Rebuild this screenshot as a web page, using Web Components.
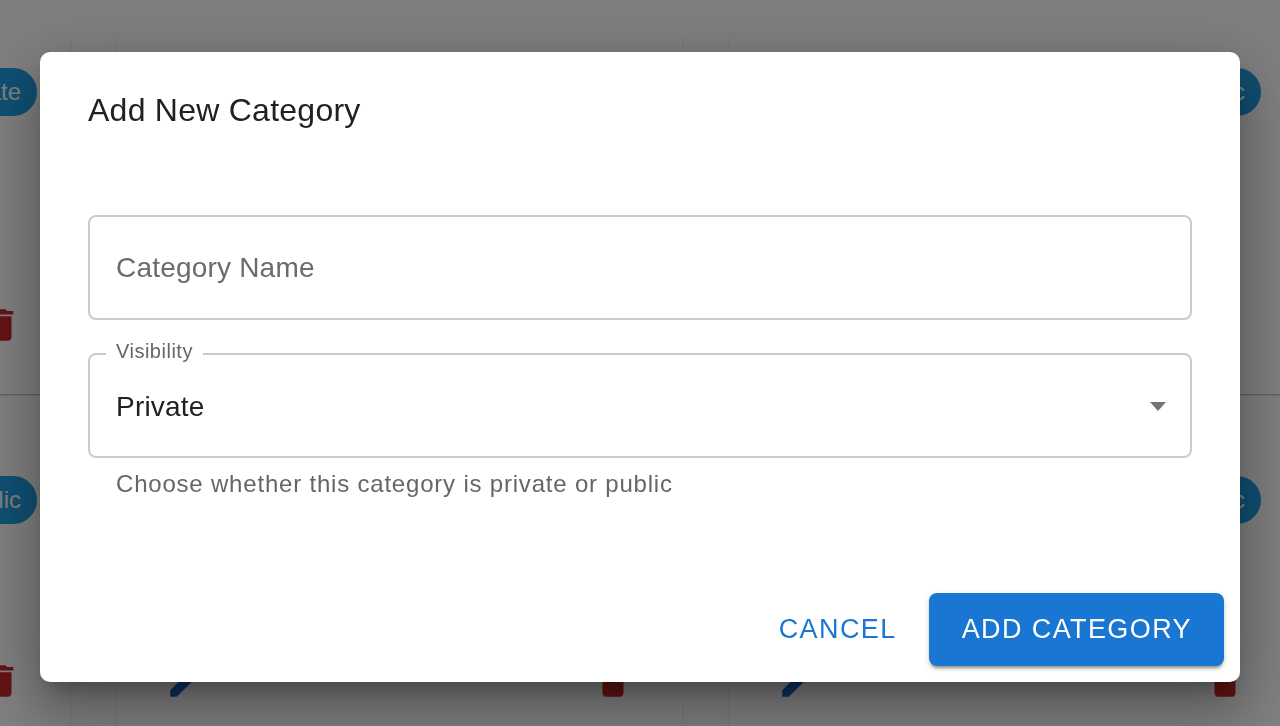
<!DOCTYPE html>
<html lang="en">
<head>
<meta charset="utf-8">
<title>Add New Category</title>
<style>
  html, body { margin: 0; height: 100%; overflow: hidden; background: #fff; font-family: "Liberation Sans", Arial, sans-serif; }
</style>
</head>
<body>
<category-grid>
  <category-card chip="Private"></category-card>
  <category-card></category-card>
  <category-card chip="Public"></category-card>
  <category-card chip="Public"></category-card>
  <category-card></category-card>
  <category-card chip="Public"></category-card>
</category-grid>

<add-dialog heading="Add New Category">
  <outlined-field placeholder="Category Name"></outlined-field>
  <outlined-field label="Visibility" value="Private" helper="Choose whether this category is private or public" select></outlined-field>
  <dialog-button slot="actions" variant="text">Cancel</dialog-button>
  <dialog-button slot="actions" variant="contained">Add Category</dialog-button>
</add-dialog>

<script>
const EDIT_PATH = 'M3 17.25V21h3.75L17.81 9.94l-3.75-3.75L3 17.25zM20.71 7.04c.39-.39.39-1.02 0-1.41l-2.34-2.34c-.39-.39-1.02-.39-1.41 0l-1.83 1.83 3.75 3.75 1.83-1.83z';
const DELETE_PATH = 'M6 19c0 1.1.9 2 2 2h8c1.1 0 2-.9 2-2V7H6v12zM19 4h-3.5l-1-1h-5l-1 1H5v2h14V4z';

class CategoryGrid extends HTMLElement {
  constructor() {
    super();
    this.attachShadow({ mode: 'open' });
    this.shadowRoot.innerHTML = `
      <style>
        :host {
          display: grid;
          grid-template-columns: repeat(3, 565px);
          grid-template-rows: 361px 309px;
          column-gap: 47px;
          row-gap: 47px;
          padding-top: 33px;
          margin-left: -495px;
          width: 1790px;
        }
      </style>
      <slot></slot>
    `;
  }
}

class CategoryCard extends HTMLElement {
  constructor() {
    super();
    this.attachShadow({ mode: 'open' });
    const chip = this.getAttribute('chip');
    this.shadowRoot.innerHTML = `
      <style>
        :host {
          display: flex;
          flex-direction: column;
          background: #fff;
          border-radius: 8px;
          box-shadow: 0 2px 2px -1px rgba(0,0,0,.2), 0 1px 2px 0 rgba(0,0,0,.1), 0 1px 4px 0 rgba(0,0,0,.06);
        }
        .top {
          display: flex;
          justify-content: flex-end;
          padding: 35px 33px 0;
        }
        .chip {
          height: 48px;
          line-height: 48px;
          padding: 0 16px;
          border-radius: 24px;
          background: #1f9fe6;
          color: #fff;
          font-size: 24px;
        }
        .actions {
          margin-top: auto;
          display: flex;
          justify-content: space-between;
          padding: 0 48.5px 48px 48px;
        }
        svg { width: 42px; height: 42px; display: block; }
      </style>
      <div class="top">${chip ? `<span class="chip">${chip}</span>` : ''}</div>
      <div class="actions">
        <svg viewBox="0 0 24 24" fill="#1565c0"><path d="${EDIT_PATH}"/></svg>
        <svg viewBox="0 0 24 24" fill="#c62828"><path d="${DELETE_PATH}"/></svg>
      </div>
    `;
  }
}

class AddDialog extends HTMLElement {
  constructor() {
    super();
    this.attachShadow({ mode: 'open' });
    this.shadowRoot.innerHTML = `
      <style>
        :host {
          position: fixed;
          inset: 0;
          display: flex;
          padding: 52px 40px 44px;
          background: rgba(0,0,0,.5);
          color: #212121;
        }
        .paper {
          flex: 1;
          display: flex;
          flex-direction: column;
          background: #fff;
          border-radius: 10px;
          box-shadow: 0 15px 20px -9px rgba(0,0,0,.26), 0 32px 50px 4px rgba(0,0,0,.18), 0 12px 61px 11px rgba(0,0,0,.16);
        }
        h2 {
          margin: 0;
          padding: 39px 48px 0;
          font-size: 32px;
          line-height: 38px;
          font-weight: 400;
          letter-spacing: .25px;
        }
        .content {
          display: flex;
          flex-direction: column;
          gap: 33px;
          padding: 86px 48px 0;
        }
        .actions {
          margin-top: auto;
          display: flex;
          justify-content: flex-end;
          align-items: center;
          gap: 10px;
          padding: 0 16px 16px;
        }
      </style>
      <div class="paper">
        <h2>${this.getAttribute('heading')}</h2>
        <div class="content"><slot></slot></div>
        <div class="actions"><slot name="actions"></slot></div>
      </div>
    `;
  }
}

class OutlinedField extends HTMLElement {
  constructor() {
    super();
    this.attachShadow({ mode: 'open' });
    const label = this.getAttribute('label');
    const value = this.getAttribute('value');
    const placeholder = this.getAttribute('placeholder');
    const helper = this.getAttribute('helper');
    this.shadowRoot.innerHTML = `
      <style>
        :host { display: block; }
        .box {
          position: relative;
          box-sizing: border-box;
          height: 105px;
          display: flex;
          align-items: center;
          justify-content: space-between;
          padding: 0 24px 0 26px;
          border: 2px solid #cbcbcb;
          border-radius: 8px;
          font-size: 28px;
          letter-spacing: .2px;
        }
        .value { color: #212121; padding-top: 2px; }
        .placeholder { color: #6b6b6b; }
        .label {
          position: absolute;
          left: 16px;
          top: -16px;
          padding: 0 10px;
          background: #fff;
          color: #666;
          font-size: 20px;
          line-height: 24px;
          letter-spacing: .5px;
        }
        .arrow { width: 0; height: 0; margin-top: 2px; border: 8.5px solid transparent; border-top: 9px solid #757575; border-bottom: 0; }
        .helper {
          padding: 11px 28px 0;
          color: #666;
          font-size: 24px;
          line-height: 30px;
          letter-spacing: .8px;
        }
      </style>
      <div class="box">
        ${label ? `<span class="label">${label}</span>` : ''}
        ${value ? `<span class="value">${value}</span>` : `<span class="placeholder">${placeholder}</span>`}
        ${this.hasAttribute('select') ? '<span class="arrow"></span>' : ''}
      </div>
      ${helper ? `<div class="helper">${helper}</div>` : ''}
    `;
  }
}

class DialogButton extends HTMLElement {
  constructor() {
    super();
    this.attachShadow({ mode: 'open' });
    this.shadowRoot.innerHTML = `
      <style>
        :host {
          display: block;
          text-transform: uppercase;
          font-size: 27px;
          letter-spacing: 1.4px;
        }
        button {
          font: inherit;
          letter-spacing: inherit;
          text-transform: inherit;
          height: 73px;
          border: 0;
          border-radius: 8px;
          cursor: pointer;
        }
        :host([variant="text"]) button {
          padding: 0 22px;
          background: transparent;
          color: #1976d2;
        }
        :host([variant="contained"]) button {
          padding: 0 32px 0 33px;
          background: #1976d2;
          color: #fff;
          box-shadow: 0 4px 2px -2px rgba(0,0,0,.2), 0 3px 3px 0 rgba(0,0,0,.14), 0 2px 7px 0 rgba(0,0,0,.12);
        }
      </style>
      <button><slot></slot></button>
    `;
  }
}

customElements.define('category-grid', CategoryGrid);
customElements.define('category-card', CategoryCard);
customElements.define('add-dialog', AddDialog);
customElements.define('outlined-field', OutlinedField);
customElements.define('dialog-button', DialogButton);
</script>
</body>
</html>
